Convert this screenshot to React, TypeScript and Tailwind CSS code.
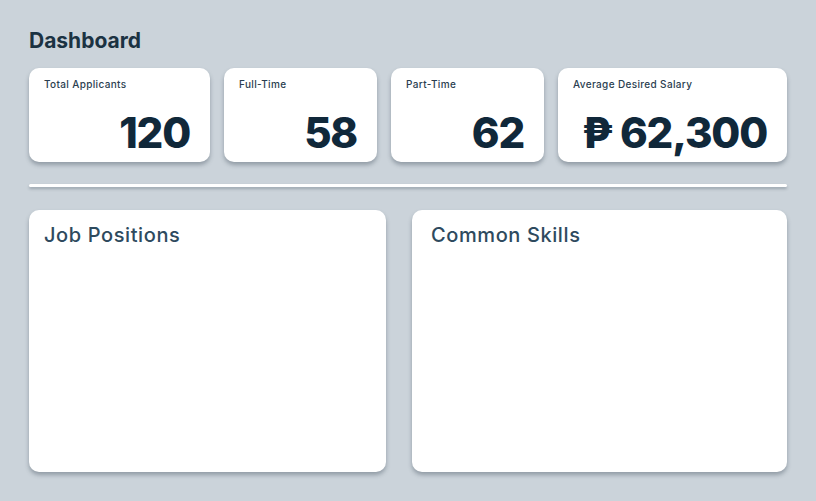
const stats = [
  { label: "Total Applicants", value: "120" },
  { label: "Full-Time", value: "58" },
  { label: "Part-Time", value: "62" },
  { label: "Average Desired Salary", value: "₱ 62,300" },
];

const App = () => {
  return (
    <div className="min-h-screen bg-[#cbd3da] px-[29px] pt-[27px] pb-8 font-['Inter','Liberation_Sans',sans-serif]">
      <h1 className="text-[21px] leading-[28px] font-bold text-[#1b3242] mb-[13px]">Dashboard</h1>

      <div className="grid grid-cols-[181px_153px_153px_229px] gap-[14px]">
        {stats.map((stat, index) => (
          <div
            key={index}
            className="h-[94px] bg-white rounded-[10px] shadow-[0_3px_4px_rgba(40,55,70,0.35)] pl-[15px] pr-[20px] pt-[9px]"
          >
            <p className="text-[10px] leading-[14px] font-medium tracking-[0.35px] text-[#2a3e50]">{stat.label}</p>
            <p className="mt-[20px] text-right text-[42px] leading-[43px] font-extrabold tracking-[-1.2px] text-[#10283a]">
              {stat.value}
            </p>
          </div>
        ))}
      </div>

      <div className="mt-[22px] h-[3px] bg-white rounded-full shadow-[0_2px_3px_rgba(40,55,70,0.3)]" />

      <div className="mt-[23px] grid grid-cols-[357px_375px] gap-[26px]">
        <div className="h-[262px] bg-white rounded-[10px] shadow-[0_3px_4px_rgba(40,55,70,0.35)] px-[15px] pt-[12px]">
          <h2 className="text-[20px] leading-[26px] font-medium tracking-[0.6px] text-[#2e4a5e]">Job Positions</h2>
        </div>
        <div className="h-[262px] bg-white rounded-[10px] shadow-[0_3px_4px_rgba(40,55,70,0.35)] px-[19px] pt-[12px]">
          <h2 className="text-[20px] leading-[26px] font-medium tracking-[0.6px] text-[#2e4a5e]">Common Skills</h2>
        </div>
      </div>
    </div>
  );
};

export default App;
